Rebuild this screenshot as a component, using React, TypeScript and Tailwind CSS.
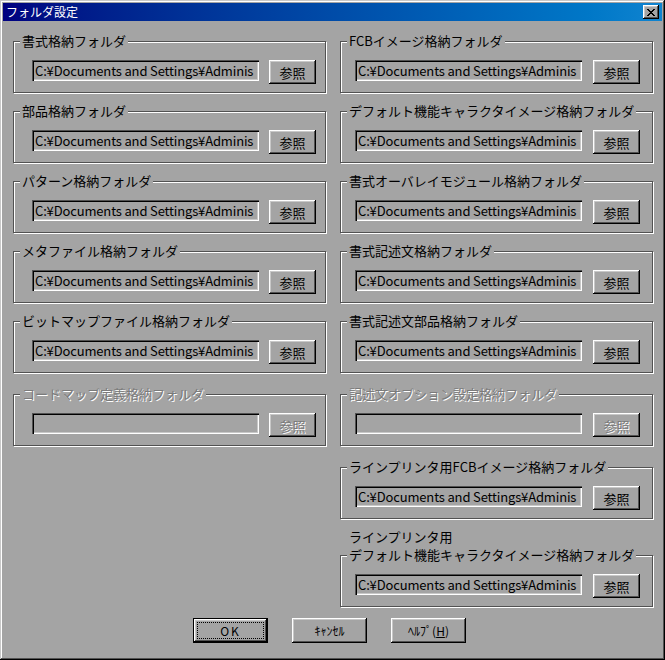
import React from "react";

const raised =
    "shadow-[inset_-1px_-1px_0_#000,inset_1px_1px_0_#fff,inset_-2px_-2px_0_#525252,inset_2px_2px_0_#c8c8c8]";
const sunken =
    "shadow-[inset_1px_1px_0_#525252,inset_2px_2px_0_#000,inset_-1px_-1px_0_#fff,inset_-2px_-2px_0_#c8c8c8]";
const disabledText = "text-[#7b7b7b] [text-shadow:1px_1px_0_#fff]";

// only the part that shows in the box
const PATH = "C:¥Documents and Settings¥Adminis";

interface GroupProps {
    label: string;
    path?: string;
    disabled?: boolean;
    right?: boolean;
    className?: string;
}

const FolderGroup = ({ label, path = PATH, disabled = false, right = false, className = "" }: GroupProps) => {
    return (
        <fieldset className={`border border-[#525252] shadow-[inset_1px_1px_0_#fff,1px_1px_0_#fff] ${className}`}>
            <legend className={`ml-[6px] px-[2px] leading-[14px] bg-[#a4a4a4] whitespace-nowrap ${disabled ? disabledText : ""}`}>
                {label}
            </legend>
            <div className={`flex items-start pt-[12px] pb-[8px] ${right ? "pl-[14px] gap-[11px]" : "pl-[18px] gap-[10px]"}`}>
                <div className={`w-[227px] h-[21px] ${sunken} pl-[3px] pr-[1px] overflow-hidden whitespace-nowrap leading-[21px] tracking-[-0.15px]`}>
                    {disabled ? "" : path}
                </div>
                <button className={`w-[47px] h-[24px] ${raised} flex items-center justify-center leading-none ${disabled ? disabledText : ""}`}>
                    参照
                </button>
            </div>
        </fieldset>
    );
};

const DialogButton = ({ children, isDefault = false }: { children: React.ReactNode; isDefault?: boolean }) => {
    if (isDefault) {
        return (
            <button className="w-[75px] h-[25px] border border-black p-0">
                <div className={`w-full h-full ${raised} p-[3px]`}>
                    <div className="w-full h-full border border-dotted border-black flex items-center justify-center leading-none text-[12px] tracking-[2px]">
                        {children}
                    </div>
                </div>
            </button>
        );
    }
    return (
        <button className={`w-[75px] h-[25px] ${raised} flex items-center justify-center leading-none text-[12px]`}>
            {children}
        </button>
    );
};

const leftGroups = [
    "書式格納フォルダ",
    "部品格納フォルダ",
    "パターン格納フォルダ",
    "メタファイル格納フォルダ",
    "ビットマップファイル格納フォルダ",
];

const rightGroups = [
    "FCBイメージ格納フォルダ",
    "デフォルト機能キャラクタイメージ格納フォルダ",
    "書式オーバレイモジュール格納フォルダ",
    "書式記述文格納フォルダ",
    "書式記述文部品格納フォルダ",
];

export default function App() {
    return (
        <div className="w-[665px] h-[660px] bg-[#a4a4a4] p-[3px] flex flex-col shadow-[inset_-1px_-1px_0_#000,inset_1px_1px_0_#c8c8c8,inset_-2px_-2px_0_#525252,inset_2px_2px_0_#fff] font-['Noto_Sans_CJK_JP',sans-serif] text-[13px] text-black">
            {/* title bar */}
            <div className="h-[18px] flex items-center justify-between bg-linear-to-r from-[#000080] to-[#1084d0] pl-[3px] pr-[3px]">
                <span className="text-white text-[12px] leading-[18px]">フォルダ設定</span>
                <button className={`w-[16px] h-[14px] bg-[#a4a4a4] ${raised} flex items-center justify-center`}>
                    <svg width="8" height="7" viewBox="0 0 8 7">
                        <path d="M0 0h2v1h1v1h2v-1h1v-1h2v1h-1v1h-1v1h-1v1h1v1h1v1h1v1h-2v-1h-1v-1h-2v1h-1v1h-2v-1h1v-1h1v-1h1v-1h-1v-1h-1v-1h-1z" fill="#000" />
                    </svg>
                </button>
            </div>

            <div className="flex pl-[10px] pt-[13px] gap-[14px]">
                <div className="flex flex-col w-[313px] gap-[11px]">
                    {leftGroups.map((g) => (
                        <FolderGroup key={g} label={g} />
                    ))}
                    <FolderGroup label="コードマップ定義格納フォルダ" disabled className="mt-[3px]" />
                </div>
                <div className="flex flex-col w-[313px] gap-[11px]">
                    {rightGroups.map((g) => (
                        <FolderGroup key={g} label={g} right />
                    ))}
                    <FolderGroup label="記述文オプション設定格納フォルダ" disabled right className="mt-[3px]" />
                    <FolderGroup label="ラインプリンタ用FCBイメージ格納フォルダ" right className="mt-[3px]" />
                    <div className="flex flex-col">
                        <div className="ml-[9px] leading-[14px] mb-[4px]">ラインプリンタ用</div>
                        <FolderGroup label="デフォルト機能キャラクタイメージ格納フォルダ" right />
                    </div>
                </div>
            </div>

            <div className="flex gap-[24px] ml-[190px] mt-[11px]">
                <DialogButton isDefault>OK</DialogButton>
                <DialogButton>ｷｬﾝｾﾙ</DialogButton>
                <DialogButton>
                    ﾍﾙﾌﾟ(<span className="underline">H</span>)
                </DialogButton>
            </div>
        </div>
    );
}
